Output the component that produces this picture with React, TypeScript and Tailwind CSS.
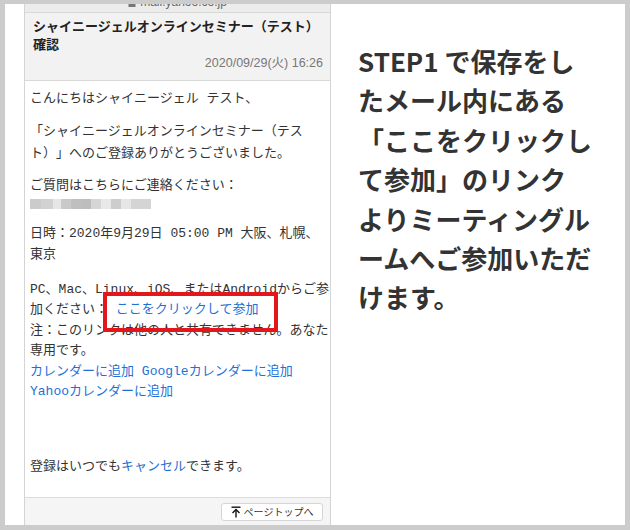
import React from "react";

const blurBlocks: string[] = [
  "w-[11px] bg-[#cbcbcb]",
  "w-[12px] bg-[#d2d2d2]",
  "w-[8px] bg-[#e6e6e6]",
  "w-[10px] bg-[#c9c9c9]",
  "w-[10px] bg-[#bfbfbf]",
  "w-[10px] bg-[#bdbdbd]",
  "w-[10px] bg-[#d6d6d6]",
  "w-[10px] bg-[#e9e9e9]",
  "w-[10px] bg-[#cdcdcd]",
  "w-[10px] bg-[#e6e6e6]",
  "w-[20px] bg-[#d4d4d4]",
];

function Link({ children }: { children: React.ReactNode }) {
  return <span className="text-[#1f6fd6]">{children}</span>;
}

export default function App() {
  return (
    <div className="w-[630px] h-[530px] bg-[#cccccc] pt-[4px] pl-[5px] pr-[5px] pb-[5px] [text-spacing-trim:space-all]">
      <div className="w-full h-full bg-white flex">
        {/* Left: email screenshot */}
        <div className="ml-[19px] w-[307px] h-full flex flex-col border-x border-[#d4d4d4]">
          {/* top cropped url strip */}
          <div className="h-[9px] overflow-hidden bg-[#ececec] border-b border-[#d8d8d8] flex items-start justify-center">
            <div className="-mt-[8px] h-[12px] flex items-end gap-[4px] text-[12px] leading-[12px] text-[#666] font-['Liberation_Sans',sans-serif] whitespace-nowrap">
              <svg width="8" height="10" viewBox="0 0 8 10" className="mb-[1px]">
                <rect x="0.5" y="4" width="7" height="6" fill="#777" />
                <path d="M2 4V2.5a2 2 0 0 1 4 0V4" stroke="#777" fill="none" />
              </svg>
              <span>mail.yahoo.co.jp</span>
            </div>
          </div>
          {/* header */}
          <div className="bg-[#f2f2f2] border-b border-[#d8d8d8] pl-[8px] pr-[7px] pt-[4px] pb-[8px]">
            <div className="text-[13px] leading-[18px] font-bold text-[#222] font-['Noto_Sans_CJK_JP',sans-serif] whitespace-nowrap">
              シャイニージェルオンラインセミナー（テスト）
              <br />
              確認
            </div>
            <div className="mt-[1px] text-right text-[12.5px] leading-[18px] text-[#777] font-['Liberation_Sans','Noto_Sans_CJK_JP',sans-serif]">
              2020/09/29(火) 16:26
            </div>
          </div>
          {/* body */}
          <div className="relative flex-1 bg-white pl-[5px] pt-[7px] text-[13px] text-[#333] font-['Liberation_Mono','Noto_Sans_CJK_JP',monospace] whitespace-nowrap overflow-hidden">
            <div className="leading-[21px]">こんにちはシャイニージェル テスト、</div>
            <div className="mt-[12px] leading-[22px]">
              「シャイニージェルオンラインセミナー（テス
              <br />
              ト）」へのご登録ありがとうございました。
            </div>
            <div className="mt-[10px] leading-[21px]">ご質問はこちらにご連絡ください：</div>
            <div className="mt-[3px] h-[10px] flex">
              {blurBlocks.map((c, i) => (
                <div key={i} className={"h-full " + c} />
              ))}
            </div>
            <div className="mt-[14px] leading-[21px]">
              日時：2020年9月29日 05:00 PM 大阪、札幌、
              <br />
              東京
            </div>
            <div className="mt-[15px] leading-[20.4px]">
              <div>PC、Mac、Linux、iOS、またはAndroidからご参</div>
              <div>
                加ください： <Link>ここをクリックして参加</Link>
              </div>
              <div>注：このリンクは他の人と共有できません。あなた</div>
              <div>専用です。</div>
              <div>
                <Link>カレンダーに追加</Link> <Link>Googleカレンダーに追加</Link>
              </div>
              <div>
                <Link>Yahooカレンダーに追加</Link>
              </div>
            </div>
            <div className="mt-[54px] leading-[21px]">
              登録はいつでも<Link>キャンセル</Link>できます。
            </div>
            {/* red highlight box */}
            <div className="absolute left-[78px] top-[211px] w-[175px] h-[40px] border-[4px] border-[#e3161c]" />
          </div>
          {/* footer */}
          <div className="h-[28px] shrink-0 bg-[#f5f5f5] border-t border-[#dcdcdc] flex justify-end pr-[7px] pt-[5px]">
            <div className="w-[102px] h-[18px] bg-white border border-[#d6d6d6] rounded-[3px] flex items-center justify-center gap-[3px] text-[10px] text-[#333] font-['Noto_Sans_CJK_JP',sans-serif]">
              <svg width="10" height="12" viewBox="0 0 10 12">
                <path d="M0.5 1.2H9.5" stroke="#111" strokeWidth="1.4" />
                <path d="M5 11.5V3.5" stroke="#111" strokeWidth="1.4" />
                <path d="M1.5 7L5 3.5L8.5 7" stroke="#111" strokeWidth="1.4" fill="none" />
              </svg>
              <span className="leading-[12px]">ページトップへ</span>
            </div>
          </div>
        </div>
        {/* Right: instruction text */}
        <div className="pl-[27px] pt-[37px] text-[26px] leading-[39.4px] font-bold text-[#333] font-['Noto_Sans_CJK_JP',sans-serif] whitespace-nowrap">
          STEP1 で保存をし
          <br />
          たメール内にある
          <br />
          「ここをクリックし
          <br />
          て参加」のリンク
          <br />
          よりミーティングル
          <br />
          ームへご参加いただ
          <br />
          けます。
        </div>
      </div>
    </div>
  );
}
